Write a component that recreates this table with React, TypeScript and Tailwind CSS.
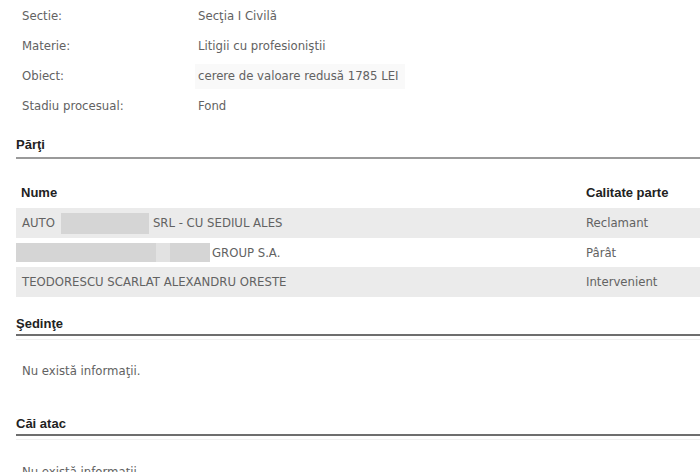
import React from "react";

const body = { fontFamily: '"DejaVu Sans Condensed", Tahoma, "Liberation Sans", sans-serif' };
const bold = { fontFamily: '"Liberation Sans", Arial, sans-serif' };

function InfoRow({ label, value, shaded }: { label: string; value: string; shaded?: boolean }) {
  return (
    <div className="flex h-[30px] items-center">
      <div className="w-[176px] shrink-0">{label}</div>
      <div className={shaded ? "-ml-[3px] flex h-[25px] items-center bg-[#f9f9f9] pl-[3px] pr-[6px]" : ""}>{value}</div>
    </div>
  );
}

function Heading({ title, thick }: { title: string; thick?: boolean }) {
  return (
    <div className="ml-[16px]" style={bold}>
      <div
        className={
          thick
            ? "border-b-2 border-[#9a9a9a] pb-[4px] text-[13px] font-bold leading-[16px] text-[#222]"
            : "border-b-2 border-[#6e6e6e] pb-[2px] text-[13px] font-bold leading-[16px] text-[#222]"
        }
      >
        {title}
      </div>
      {!thick && <div className="h-[4px] border-b border-[#f0f0f0]" />}
    </div>
  );
}

export default function App() {
  return (
    <div className="relative h-[472px] w-[700px] overflow-hidden bg-white text-[13px] text-[#626262]" style={body}>
      <div className="pl-[22px] pt-[1px]">
        <InfoRow label="Sectie:" value="Secţia I Civilă" />
        <InfoRow label="Materie:" value="Litigii cu profesioniştii" />
        <InfoRow label="Obiect:" value="cerere de valoare redusă 1785 LEI" shaded />
        <InfoRow label="Stadiu procesual:" value="Fond" />
      </div>

      <div className="mt-[16px]">
        <Heading title="Părţi" thick />
      </div>

      <div className="ml-[16px] mt-[19px]">
        <div className="flex h-[30px] items-center font-bold text-[#222]" style={bold}>
          <div className="w-[570px] pl-[5px]">Nume</div>
          <div>Calitate parte</div>
        </div>
        <div className="flex h-[30px] items-center bg-[#ebebeb]">
          <div className="flex w-[570px] items-center pl-[6px]">
            <span>AUTO</span>
            <span className="ml-[6px] mr-[4px] inline-block h-[21px] w-[88px] bg-[#d5d5d5]" />
            <span>SRL - CU SEDIUL ALES</span>
          </div>
          <div>Reclamant</div>
        </div>
        <div className="flex h-[29px] items-center bg-white">
          <div className="flex w-[570px] items-center">
            <span className="flex h-[19px] w-[194px]">
              <span className="h-full w-[140px] bg-[#d5d5d5]" />
              <span className="h-full w-[14px] bg-[#e2e2e2]" />
              <span className="h-full w-[40px] bg-[#d5d5d5]" />
            </span>
            <span className="ml-[2px]">GROUP S.A.</span>
          </div>
          <div>Pârât</div>
        </div>
        <div className="flex h-[30px] items-center bg-[#ebebeb]">
          <div className="w-[570px] pl-[6px]">TEODORESCU SCARLAT ALEXANDRU ORESTE</div>
          <div>Intervenient</div>
        </div>
      </div>

      <div className="mt-[19px]">
        <Heading title="Şedinţe" />
      </div>
      <div className="ml-[22px] mt-[23px] leading-[16px]">Nu există informaţii.</div>

      <div className="mt-[37px]">
        <Heading title="Căi atac" />
      </div>
      <div className="ml-[22px] mt-[24px] leading-[16px]">Nu există informaţii.</div>
    </div>
  );
}
